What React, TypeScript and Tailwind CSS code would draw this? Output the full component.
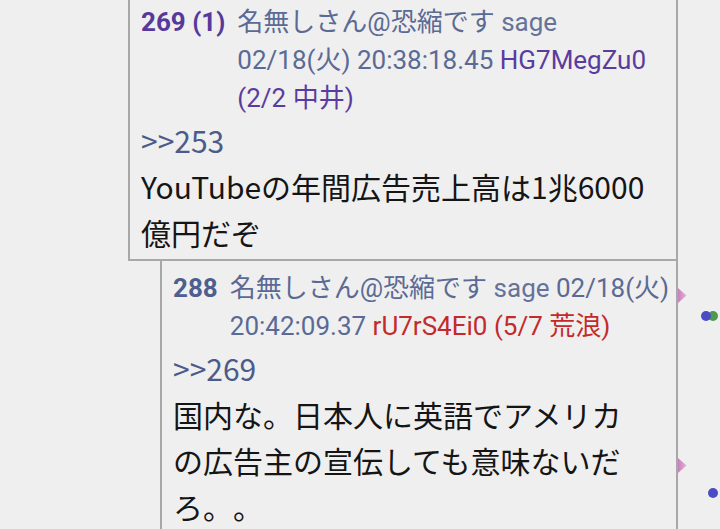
type Post = {
  no: string
  noColor: string
  date: string
  time: string
  id: string
  count: string
  idColor: string
  anchor: string
  body: string
}

const posts: Post[] = [
  {
    no: '269 (1)',
    noColor: 'text-[#55399b]',
    date: '02/18(火)',
    time: '20:38:18.45',
    id: 'HG7MegZu0',
    count: '(2/2 中井)',
    idColor: 'text-[#5a3c9e]',
    anchor: '>>253',
    body: 'YouTubeの年間広告売上高は1兆6000億円だぞ',
  },
  {
    no: '288',
    noColor: 'text-[#4e5f8e]',
    date: '02/18(火)',
    time: '20:42:09.37',
    id: 'rU7rS4Ei0',
    count: '(5/7 荒浪)',
    idColor: 'text-[#c32a2a]',
    anchor: '>>269',
    body: '国内な。日本人に英語でアメリカの広告主の宣伝しても意味ないだろ。。',
  },
]

function PostHead({ post }: { post: Post }) {
  return (
    <div className="flex gap-[12px] font-['Roboto','Noto_Sans_CJK_JP',sans-serif] text-[26px] leading-[38px]">
      <span className={`shrink-0 font-bold ${post.noColor}`}>{post.no}</span>
      <div className="min-w-0 flex-1 text-[#5a6a94]">
        <span>名無しさん@恐縮です</span> <span className="text-[#65739a]">sage</span>{' '}
        <span>{post.date}</span> <span>{post.time}</span>{' '}
        <span className={post.idColor}>{post.id}</span>{' '}
        <span className={`whitespace-nowrap ${post.idColor}`}>{post.count}</span>
      </div>
    </div>
  )
}

function PostBody({ post }: { post: Post }) {
  return (
    <div className="pr-[27px] font-['Noto_Sans_CJK_JP',sans-serif] text-[30px] leading-[46px] text-[#151515] [text-spacing-trim:space-all]">
      <div className="text-[#4b5b8b]">{post.anchor}</div>
      <div>{post.body}</div>
    </div>
  )
}

function Marker({ className }: { className: string }) {
  return (
    <svg className={`absolute ${className}`} width="9" height="15" viewBox="0 0 9 15">
      <defs>
        <linearGradient id="mk" x1="0" y1="0" x2="1" y2="0">
          <stop offset="0" stopColor="#c97fbd" />
          <stop offset="1" stopColor="#e2b3da" />
        </linearGradient>
      </defs>
      <path d="M0 0 L8.5 7.5 L0 15 Z" fill="url(#mk)" />
    </svg>
  )
}

export default function App() {
  return (
    <div className="relative h-[529px] overflow-hidden bg-[#efefef]">
      <div className="mt-[-7px] ml-[128px] w-[550px]">
        {/* レス 269 */}
        <div className="relative border-2 border-[#a8a8a8] pt-[8px] pb-[4px] pl-[11px] pr-[3px]">
          <PostHead post={posts[0]} />
          <PostBody post={posts[0]} />
        </div>

        {/* レス 288 (返信) */}
        <div className="relative ml-[32px] border-x-2 border-[#a8a8a8] pt-[8px] pb-[4px] pl-[11px] pr-[3px]">
          <PostHead post={posts[1]} />
          <PostBody post={posts[1]} />
          <Marker className="right-[-11px] top-[27px]" />
          <Marker className="right-[-11px] top-[197px]" />
        </div>
      </div>

      {/* ツリーの点 */}
      <div className="absolute left-[708px] top-[311px] h-[10px] w-[10px] rounded-full bg-[#4c9a4f]" />
      <div className="absolute left-[701px] top-[311px] h-[10px] w-[10px] rounded-full bg-[#4b4bc4]" />
      <div className="absolute left-[708px] top-[488px] h-[10px] w-[10px] rounded-full bg-[#4b4bc4]" />
    </div>
  )
}
